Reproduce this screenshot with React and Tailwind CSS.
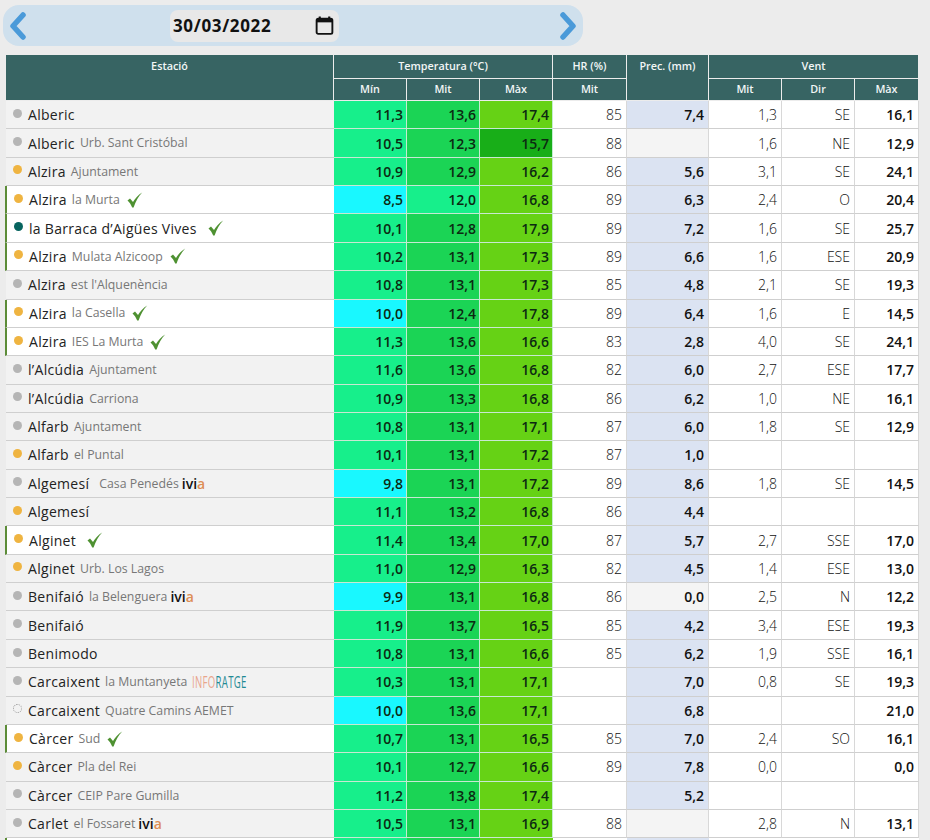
import React from 'react';

const gray = 'bg-[#b5b5b5]';
const orange = 'bg-[#efb441]';
const teal = 'bg-[#07645f]';

const rows = [
  { name: 'Alberic', dot: gray, t: ['11,3', '13,6', '17,4'], hr: '85', prec: '7,4', vent: ['1,3', 'SE', '16,1'] },
  { name: 'Alberic', sub: 'Urb. Sant Cristóbal', dot: gray, t: ['10,5', '12,3', '15,7'], hr: '88', prec: '', vent: ['1,6', 'NE', '12,9'] },
  { name: 'Alzira', sub: 'Ajuntament', dot: orange, t: ['10,9', '12,9', '16,2'], hr: '86', prec: '5,6', vent: ['3,1', 'SE', '24,1'] },
  { name: 'Alzira', sub: 'la Murta', dot: orange, check: true, t: ['8,5', '12,0', '16,8'], hr: '89', prec: '6,3', vent: ['2,4', 'O', '20,4'] },
  { name: 'la Barraca d’Aigües Vives', dot: teal, check: true, gap: 'ml-[11px]', t: ['10,1', '12,8', '17,9'], hr: '89', prec: '7,2', vent: ['1,6', 'SE', '25,7'] },
  { name: 'Alzira', sub: 'Mulata Alzicoop', dot: orange, check: true, t: ['10,2', '13,1', '17,3'], hr: '89', prec: '6,6', vent: ['1,6', 'ESE', '20,9'] },
  { name: 'Alzira', sub: "est l'Alquenència", dot: gray, t: ['10,8', '13,1', '17,3'], hr: '85', prec: '4,8', vent: ['2,1', 'SE', '19,3'] },
  { name: 'Alzira', sub: 'la Casella', dot: orange, check: true, t: ['10,0', '12,4', '17,8'], hr: '89', prec: '6,4', vent: ['1,6', 'E', '14,5'] },
  { name: 'Alzira', sub: 'IES La Murta', dot: orange, check: true, t: ['11,3', '13,6', '16,6'], hr: '83', prec: '2,8', vent: ['4,0', 'SE', '24,1'] },
  { name: 'l’Alcúdia', sub: 'Ajuntament', dot: gray, t: ['11,6', '13,6', '16,8'], hr: '82', prec: '6,0', vent: ['2,7', 'ESE', '17,7'] },
  { name: 'l’Alcúdia', sub: 'Carriona', dot: gray, t: ['10,9', '13,3', '16,8'], hr: '86', prec: '6,2', vent: ['1,0', 'NE', '16,1'] },
  { name: 'Alfarb', sub: 'Ajuntament', dot: gray, t: ['10,8', '13,1', '17,1'], hr: '87', prec: '6,0', vent: ['1,8', 'SE', '12,9'] },
  { name: 'Alfarb', sub: 'el Puntal', dot: orange, t: ['10,1', '13,1', '17,2'], hr: '87', prec: '1,0', vent: ['', '', ''] },
  { name: 'Algemesí', sub: 'Casa Penedés', subGap: 'ml-[10px]', ivia: true, dot: gray, t: ['9,8', '13,1', '17,2'], hr: '89', prec: '8,6', vent: ['1,8', 'SE', '14,5'] },
  { name: 'Algemesí', dot: orange, t: ['11,1', '13,2', '16,8'], hr: '86', prec: '4,4', vent: ['', '', ''] },
  { name: 'Alginet', dot: orange, check: true, gap: 'ml-[11px]', t: ['11,4', '13,4', '17,0'], hr: '87', prec: '5,7', vent: ['2,7', 'SSE', '17,0'] },
  { name: 'Alginet', sub: 'Urb. Los Lagos', dot: orange, t: ['11,0', '12,9', '16,3'], hr: '82', prec: '4,5', vent: ['1,4', 'ESE', '13,0'] },
  { name: 'Benifaió', sub: 'la Belenguera', ivia: true, dot: gray, t: ['9,9', '13,1', '16,8'], hr: '86', prec: '0,0', vent: ['2,5', 'N', '12,2'] },
  { name: 'Benifaió', dot: gray, t: ['11,9', '13,7', '16,5'], hr: '85', prec: '4,2', vent: ['3,4', 'ESE', '19,3'] },
  { name: 'Benimodo', dot: gray, t: ['10,8', '13,1', '16,6'], hr: '85', prec: '6,2', vent: ['1,9', 'SSE', '16,1'] },
  { name: 'Carcaixent', sub: 'la Muntanyeta', inforatge: true, dot: gray, t: ['10,3', '13,1', '17,1'], hr: '', prec: '7,0', vent: ['0,8', 'SE', '19,3'] },
  { name: 'Carcaixent', sub: 'Quatre Camins AEMET', dashed: true, t: ['10,0', '13,6', '17,1'], hr: '', prec: '6,8', vent: ['', '', '21,0'] },
  { name: 'Càrcer', sub: 'Sud', dot: orange, check: true, t: ['10,7', '13,1', '16,5'], hr: '85', prec: '7,0', vent: ['2,4', 'SO', '16,1'] },
  { name: 'Càrcer', sub: 'Pla del Rei', dot: orange, t: ['10,1', '12,7', '16,6'], hr: '89', prec: '7,8', vent: ['0,0', '', '0,0'] },
  { name: 'Càrcer', sub: 'CEIP Pare Gumilla', dot: gray, t: ['11,2', '13,8', '17,4'], hr: '', prec: '5,2', vent: ['', '', ''] },
  { name: 'Carlet', sub: 'el Fossaret', ivia: true, dot: gray, t: ['10,5', '13,1', '16,9'], hr: '88', prec: '', vent: ['2,8', 'N', '13,1'] },
];

const tempColor = (value) => {
  const v = parseFloat(value.replace(',', '.'));
  if (v <= 10) return 'bg-[#19f8ff]';
  if (v <= 12) return 'bg-[#17ef8b]';
  if (v < 15) return 'bg-[#1bd455]';
  if (v < 16) return 'bg-[#18ae18]';
  return 'bg-[#66d215]';
};

const Check = ({ className }) => (
  <svg viewBox="0 0 16 16" className={className}>
    <path d="M0.5 8.5 L3 6.6 L6 10 C8 6.5 11 3 15.2 0.5 C11.5 4.5 8.8 9 6.6 15.5 L5.2 15.5 C4 12.5 2.5 10.2 0.5 8.5 Z" fill="#4e9131" />
  </svg>
);

const Ivia = () => (
  <span className="ml-[3px] text-[14px] font-semibold text-[#111]">
    ivi<span className="text-[#dd8d55]">a</span>
  </span>
);

const Inforatge = () => (
  <span className="ml-[5px] inline-block w-[55px] origin-left scale-x-[0.6] whitespace-nowrap text-[16px] leading-none tracking-[0.5px]">
    <span className="text-[#e9a58c]">INFO</span>
    <span className="text-[#1f8a94]">RATGE</span>
  </span>
);

const Station = ({ row }) => (
  <div
    className={`flex items-center border-b border-[#cfcfcf] ${
      row.check ? '-ml-px border-l-2 border-l-[#5c8c38] bg-white pl-[7px]' : 'bg-[#f2f2f2] pl-[7px]'
    }`}
  >
    {row.dashed ? (
      <span className="mb-[3px] h-[9px] w-[9px] shrink-0 rounded-full border border-dotted border-[#999]" />
    ) : (
      <span className={`mb-[3px] h-[9px] w-[9px] shrink-0 rounded-full ${row.dot}`} />
    )}
    <span className="ml-[6px] text-[14px] tracking-[0.3px] text-[#222]">{row.name}</span>
    {row.sub && (
      <span className={`${row.subGap || 'ml-[5px]'} mt-px text-[12.3px] text-[#777]`}>{row.sub}</span>
    )}
    {row.ivia && <Ivia />}
    {row.inforatge && <Inforatge />}
    {row.check && <Check className={`${row.gap || 'ml-[7px]'} h-[16px] w-[16px]`} />}
  </div>
);

const Num = ({ children, className = '' }) => (
  <div className={`flex items-center justify-end border-b border-r text-[14px] ${className}`}>
    {children}
  </div>
);

const plain = 'border-b-[#cfcfcf] border-r-[#d8d8d8]';

const Row = ({ row }) => (
  <div className="grid h-[28.36px] grid-cols-[328px_73px_73px_73px_74px_82px_73px_73px_64px]">
    <Station row={row} />
    {row.t.map((v, i) => (
      <Num key={i} className={`border-b-[#c8e8d2] border-r-[#c4ecd0] pr-[3px] font-semibold text-[#0c2a12] ${tempColor(v)}`}>{v}</Num>
    ))}
    <Num className={`${plain} bg-white pr-[4px] font-light text-[#111]`}>{row.hr}</Num>
    <Num className={`${plain} pr-[4px] font-semibold text-[#111] ${row.prec && row.prec !== '0,0' ? 'bg-[#dbe3f2]' : 'bg-[#f4f4f4]'}`}>
      {row.prec}
    </Num>
    <Num className={`${plain} bg-white pr-[4px] font-light text-[#111]`}>{row.vent[0]}</Num>
    <Num className={`${plain} bg-white pr-[4px] font-light text-[#111]`}>{row.vent[1]}</Num>
    <Num className={`${plain} bg-white pr-[4px] font-semibold text-[#111]`}>{row.vent[2]}</Num>
  </div>
);

// row cut off by the bottom of the window: only its top edge shows
const ClippedRow = () => (
  <div className="grid h-[28.36px] grid-cols-[328px_73px_73px_73px_74px_82px_73px_73px_64px]">
    <div className="-ml-px border-l-2 border-l-[#5c8c38] bg-white" />
    <div className="bg-[#17ef8b]" />
    <div className="bg-[#1bd455]" />
    <div className="bg-[#66d215]" />
    <div className="bg-white" />
    <div className="bg-[#dbe3f2]" />
    <div className="bg-white" />
    <div className="bg-white" />
    <div className="bg-white" />
  </div>
);

const Head = ({ children, className = '' }) => (
  <div className={`flex justify-center bg-[#376463] text-[10.8px] font-semibold text-[#f2f6f6] ${className}`}>
    {children}
  </div>
);

export default function App() {
  return (
    <div className="h-[840px] w-[930px] overflow-hidden bg-[#ececec] pt-[5px] font-['Open_Sans',sans-serif]">
      <div className="ml-[3px] flex h-[41px] w-[580px] items-center rounded-[16px] bg-[#cfe0ed] px-[5px]">
        <svg viewBox="0 0 20 28" className="h-[28px] w-[20px]">
          <path d="M15 3 L5 14 L15 25" fill="none" stroke="#4a9ad9" strokeWidth="5.5" strokeLinecap="round" strokeLinejoin="round" />
        </svg>
        <div className="ml-[142px] flex h-[32px] w-[169px] items-center justify-between rounded-[8px] bg-[#e8e8e8] pl-[3px] pr-[4px]">
          <span className="text-[17px] font-bold tracking-[0.65px] text-[#111]">30/03/2022</span>
          <svg viewBox="0 0 20 20" className="h-[21px] w-[21px]">
            <path d="M5.5 1.5 V4 M14.5 1.5 V4" stroke="#111" strokeWidth="2" fill="none" />
            <rect x="2.5" y="3.5" width="15" height="14.5" rx="1.5" fill="none" stroke="#111" strokeWidth="1.8" />
            <rect x="2.5" y="3.5" width="15" height="3.5" fill="#111" />
          </svg>
        </div>
        <svg viewBox="0 0 20 28" className="ml-auto h-[28px] w-[20px]">
          <path d="M5 3 L15 14 L5 25" fill="none" stroke="#4a9ad9" strokeWidth="5.5" strokeLinecap="round" strokeLinejoin="round" />
        </svg>
      </div>

      <div className="mt-[9px] ml-[6px] w-[914px]">
        <div className="grid w-[912px] grid-cols-[327px_72px_72px_72px_73px_81px_72px_72px_63px] grid-rows-[23px_21px] gap-x-px gap-y-px">
          <Head className="row-span-2 pt-[3px]">Estació</Head>
          <Head className="col-span-3 items-center">Temperatura (°C)</Head>
          <Head className="items-center">HR (%)</Head>
          <Head className="row-span-2 pt-[3px]">Prec. (mm)</Head>
          <Head className="col-span-3 items-center">Vent</Head>
          <Head className="items-center">Mín</Head>
          <Head className="items-center">Mit</Head>
          <Head className="items-center">Màx</Head>
          <Head className="items-center">Mit</Head>
          <Head className="items-center">Mit</Head>
          <Head className="items-center">Dir</Head>
          <Head className="items-center">Màx</Head>
        </div>
        <div className="mt-px">
          {rows.map((row, i) => (
            <Row key={i} row={row} />
          ))}
          <ClippedRow />
        </div>
      </div>
    </div>
  );
}
